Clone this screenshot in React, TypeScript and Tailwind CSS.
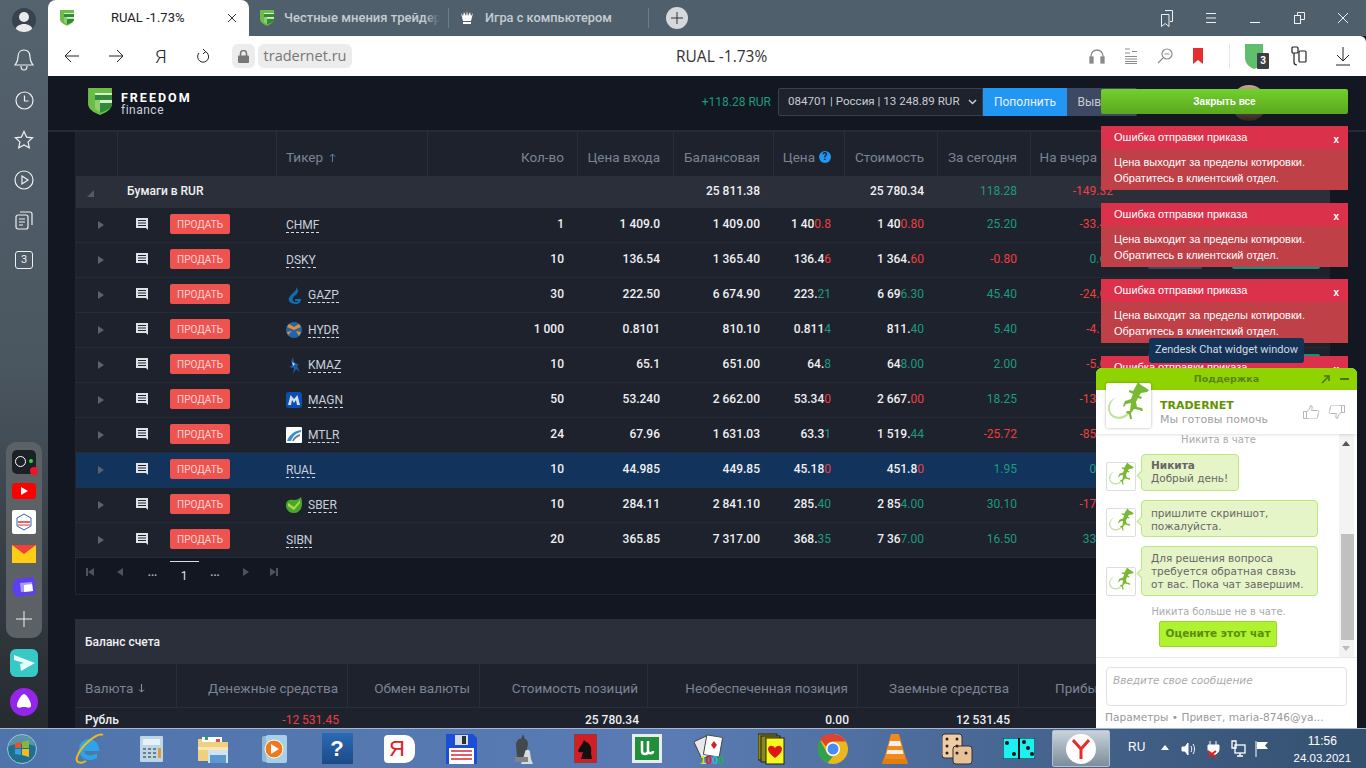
import React from "react";

const G = "text-[#1d9a7f]";
const R = "text-[#ee3f3f]";
const COLS = "grid grid-cols-[42px_159px_151px_150px_96px_100px_71px_93px_93px_96px_1fr]";
const BAL = "grid grid-cols-[102px_171px_132px_168px_210px_161px_1fr]";

type Row = {
  t: string; logo?: string; q: string; entry: string; bal: string;
  p: [string, string, string]; v: [string, string, string];
  d: [string, string]; y: [string, string]; hl?: boolean;
};

const rows: Row[] = [
  { t: "CHMF", q: "1", entry: "1 409.0", bal: "1 409.00", p: ["1 40", "0.8", R], v: ["1 40", "0.80", R], d: ["25.20", G], y: ["-33.40", R] },
  { t: "DSKY", q: "10", entry: "136.54", bal: "1 365.40", p: ["136.4", "6", R], v: ["1 364.", "60", R], d: ["-0.80", R], y: ["0.60", G] },
  { t: "GAZP", logo: "gazp", q: "30", entry: "222.50", bal: "6 674.90", p: ["223.", "21", G], v: ["6 69", "6.30", G], d: ["45.40", G], y: ["-24.00", R] },
  { t: "HYDR", logo: "hydr", q: "1 000", entry: "0.8101", bal: "810.10", p: ["0.811", "4", G], v: ["811.", "40", G], d: ["5.40", G], y: ["-4.10", R] },
  { t: "KMAZ", logo: "kmaz", q: "10", entry: "65.1", bal: "651.00", p: ["64.", "8", G], v: ["64", "8.00", G], d: ["2.00", G], y: ["-5.00", R] },
  { t: "MAGN", logo: "magn", q: "50", entry: "53.240", bal: "2 662.00", p: ["53.34", "0", R], v: ["2 667.", "00", R], d: ["18.25", G], y: ["-13.50", R] },
  { t: "MTLR", logo: "mtlr", q: "24", entry: "67.96", bal: "1 631.03", p: ["63.3", "1", G], v: ["1 519.", "44", G], d: ["-25.72", R], y: ["-85.44", R] },
  { t: "RUAL", q: "10", entry: "44.985", bal: "449.85", p: ["45.18", "0", R], v: ["451.8", "0", R], d: ["1.95", G], y: ["0.50", G], hl: true },
  { t: "SBER", logo: "sber", q: "10", entry: "284.11", bal: "2 841.10", p: ["285.", "40", G], v: ["2 85", "4.00", G], d: ["30.10", G], y: ["-17.00", R] },
  { t: "SIBN", q: "20", entry: "365.85", bal: "7 317.00", p: ["368.", "35", G], v: ["7 36", "7.00", G], d: ["16.50", G], y: ["33.00", G] },
];

function Shield({ size = 16 }: { size?: number }) {
  return (
    <svg width={size} height={size * 1.12} viewBox="0 0 24 27">
      <path d="M0 0h24v16c0 5-6 9-12 11C6 25 0 21 0 16z" fill="#6cbd45" />
      <path d="M7 7h17v5H7z" fill="#2f8a3a" />
      <path d="M7 12h5v12l-5-3z" fill="#fff" opacity=".25" />
      <path d="M12 15h12v1c0 2-1 4-3 5l-9 4z" fill="#2f8a3a" />
      <path d="M7 5h17v2H7zM12 12h12v3H12z" fill="#d8efc8" />
    </svg>
  );
}

function Gecko({ size = 45 }: { size?: number }) {
  return (
    <svg width={size} height={size} viewBox="0 0 45 45">
      <path d="M23 31C17 39 4 37 2 27 1 21 5 16 11 14 6 17 3 22 4 27c2 8 12 9 18 2z" fill="#c3e19e" />
      <path d="M35 2l8 5-2 2-6 1-2 3 3 1-1 2-3-1-2 4 1 5 5 1 1 3-2 0-1-1-6-1-3 4 1 6-2 0-1-5-3-1 1-2 3 0 1-8-5 1-2 3-1-1 2-5 6-2 2-5-4-2 0-2 4 1 3-5 2-4z" fill="#78b832" />
    </svg>
  );
}

function Logo({ k }: { k: string }) {
  if (k === "gazp")
    return (
      <svg width="15" height="17" viewBox="0 0 15 17">
        <path d="M9 0c1 3-1 4-3 6C3 9 1 11 2 14c1 2 4 3 7 3 3 0 5-2 5-5H8v2h3c0 1-1 1-2 1-3 0-4-2-3-4 1-3 5-3 5-7 0-1-1-3-2-4z" fill="#0f6fb5" />
      </svg>
    );
  if (k === "hydr")
    return (
      <svg width="16" height="16" viewBox="0 0 16 16">
        <circle cx="8" cy="8" r="8" fill="#1b67b3" />
        <path d="M3 2l5 3 5-3 2 3-7 3-7-3zM1 10l5-1-4 4zM15 10l-5-1 3 5z" fill="#f08a24" />
      </svg>
    );
  if (k === "kmaz")
    return (
      <svg width="15" height="17" viewBox="0 0 15 17">
        <path d="M6 0L4 5l4 2-6 3 5 1-1 6 3-5 4 3-3-6 2-1-5-3z" fill="#1b5ea8" />
        <path d="M5 5l3 2-2 2z" fill="#cfe3f7" />
      </svg>
    );
  if (k === "magn")
    return (
      <svg width="16" height="16" viewBox="0 0 16 16">
        <rect width="16" height="16" rx="3" fill="#0c4fb0" />
        <path d="M2 13L4.500 3 8 7l3.500-4L14 13h-3L10 8 8 11 6 8l-1 5z" fill="#cfe0f5" />
      </svg>
    );
  if (k === "mtlr")
    return (
      <svg width="16" height="16" viewBox="0 0 16 16">
        <rect width="16" height="16" rx="1" fill="#fff" />
        <path d="M1 14C3 8 8 4 15 3v2C10 6 7 9 5 14z" fill="#3a8fd6" />
        <path d="M6 14c1-3 4-6 8-7v2c-3 1-5 3-6 5z" fill="#7a7f87" />
      </svg>
    );
  return (
    <svg width="16" height="16" viewBox="0 0 16 16">
      <path d="M8 3c3 0 5-1 7-3 1 2 1 5 1 7 0 5-3 9-8 9s-8-3-8-8 4-6 8-5z" fill="#4aa52e" />
      <path d="M2 6l6 4 6-7v3l-6 7-6-4z" fill="#a7dd3d" />
    </svg>
  );
}

function Tri({ cls = "" }: { cls?: string }) {
  return <div className={`w-0 h-0 border-y-[4px] border-y-transparent border-l-[6px] border-l-[#5c6270] ${cls}`} />;
}

function Note() {
  return (
    <svg width="12" height="12" viewBox="0 0 12 12">
      <path d="M0 0h12v12l-2-2H0z" fill="#dfe3e8" />
      <path d="M2 2.500h8M2 5h8M2 7.500h8" stroke="#1e222d" strokeWidth="1" />
    </svg>
  );
}

function Num({ v }: { v: [string, string, string] }) {
  return (
    <span>
      {v[0]}
      <span className={`${v[2]} font-normal`}>{v[1]}</span>
    </span>
  );
}

function Help() {
  return <span className="w-[12px] h-[12px] rounded-full bg-[#2196f3] text-[#10223c] text-[10px] font-bold leading-[12px] text-center shrink-0">?</span>;
}

function HeadCell({ children, last }: { children: React.ReactNode; last?: boolean }) {
  return (
    <div className={`h-full flex items-center justify-end pt-[6px] gap-[4px] text-[13.500px] text-[#7b8494] whitespace-nowrap ${last ? "pr-[14px]" : "pr-[13px] border-r border-[#2a2e39]"}`}>
      {children}
    </div>
  );
}

function StockRow({ r }: { r: Row }) {
  const cell = "h-full flex items-center justify-end pr-[14px] pb-[2px] text-[12px] font-medium text-[#eef0f3]";
  return (
    <div className={`${COLS} h-[35px] border-b border-dotted border-[#2e323d] ${r.hl ? "bg-[#12335c]" : ""}`}>
      <div className="flex items-center justify-end pr-[14px]"><Tri /></div>
      <div className="flex items-center pb-[2px]">
        <div className="ml-[18px] w-[34px]"><Note /></div>
        <div className="w-[60px] h-[20px] rounded-[2px] bg-[#ef5350] text-[#ffd5d3] text-[10px] flex items-center justify-center">ПРОДАТЬ</div>
      </div>
      <div className="flex items-center pl-[9px] gap-[6px]">
        {r.logo && <div className="w-[16px] flex justify-center"><Logo k={r.logo} /></div>}
        <span className="text-[12px] text-[#c8d0dc] border-b border-dashed border-[#d8dde4] leading-[14px]">{r.t}</span>
      </div>
      <div className={cell}>{r.q}</div>
      <div className={cell}>{r.entry}</div>
      <div className={cell}>{r.bal}</div>
      <div className={cell}><Num v={r.p} /></div>
      <div className={cell}><Num v={r.v} /></div>
      <div className={`h-full flex items-center justify-end pr-[14px] pb-[3px] text-[12px] ${r.d[1]}`}>{r.d[0]}</div>
      <div className={`h-full flex items-center justify-end pr-[14px] pb-[2px] text-[12px] ${r.y[1]}`}>{r.y[0]}</div>
      <div className="flex items-center pl-[21px] pb-[2px]">
        <div className="w-[54px] h-[20px] rounded-[2px] bg-[#3b4660]" />
        <div className="w-[88px] h-[20px] ml-[30px] rounded-[2px] bg-[#14907f]" />
      </div>
    </div>
  );
}

function Toast({ cut }: { cut?: boolean }) {
  return (
    <div className={`w-[247px] text-white text-[11px] ${cut ? "h-[12px] overflow-hidden" : ""}`} style={{ fontFamily: '"Liberation Sans", sans-serif' }}>
      <div className="h-[23px] bg-[#dc314b] flex items-center justify-between pl-[13px] pr-[9px]">
        <span>Ошибка отправки приказа</span>
        <span className="text-[10px] font-bold pt-[3px]">x</span>
      </div>
      <div className="h-[41px] bg-[#c04048] pl-[13px] pt-[5px] leading-[16px]">
        <div>Цена выходит за пределы котировки.</div>
        <div>Обратитесь в клиентский отдел.</div>
      </div>
    </div>
  );
}

function ChatMsg({ h, w, children }: { h: number; w: number; children: React.ReactNode }) {
  return (
    <div className="flex items-end" style={{ height: h }}>
      <div className="ml-[10px] w-[30px] h-[29px] border border-[#ddd] rounded-[2px] bg-white flex items-center justify-center">
        <Gecko size={27} />
      </div>
      <div className="relative ml-[5px]" style={{ width: w }}>
        <div className="absolute left-[-3px] top-1/2 w-[7px] h-[7px] rotate-45 bg-[#e6f5c8] border-l border-b border-[#bce878] -translate-y-[1px]" />
        <div className="border border-[#bce878] bg-[#e6f5c8] rounded-[4px] pl-[9px] pr-[6px] py-[3px] text-[10.500px] leading-[13px] text-[#666]" style={{ height: h }}>
          {children}
        </div>
      </div>
    </div>
  );
}

function Chat() {
  return (
    <div className="absolute left-[1096px] top-[368px] w-[261px] h-[360px] z-30 flex flex-col bg-white rounded-t-[6px] overflow-hidden text-[11px]" style={{ fontFamily: '"DejaVu Sans", sans-serif' }}>
      <div className="h-[22px] bg-[#8fd400] flex items-center relative">
        <span className="w-full text-center font-bold text-[9.500px] text-[#5c7f1e]">Поддержка</span>
        <svg className="absolute left-[225px] top-[7px]" width="9" height="9" viewBox="0 0 9 9"><path d="M1 8l6-6M3 1h5v5" stroke="#4f6f16" strokeWidth="1.500" fill="none" /></svg>
        <div className="absolute left-[244px] top-[10px] w-[9px] h-[2px] bg-[#4f6f16]" />
      </div>
      <div className="h-[44px] relative flex shadow-[0_1px_3px_rgba(0,0,0,0.12)] z-10 bg-white">
        <div className="absolute left-[10px] top-[-7px] w-[45px] h-[45px] bg-white rounded-[2px] shadow-[0_0_3px_rgba(0,0,0,0.3)]"><Gecko /></div>
        <div className="ml-[64px] pt-[9px]">
          <div className="font-bold text-[11px] leading-[13px] text-[#5f9400]">TRADERNET</div>
          <div className="text-[#a0a0a0] leading-[13px] mt-[1px] text-[11px]">Мы готовы помочь</div>
        </div>
        <svg className="absolute left-[207px] top-[15px]" width="17" height="14" viewBox="0 0 17 14" fill="none" stroke="#b5b5b5"><path d="M.5 6.500h3v7h-3zM3.500 7l3-3 1-3.500c2 0 2 2 1 5h6c1 0 2 1 1 2l-1 5c0 1-1 1.500-2 1.500H6l-2.500-1" /></svg>
        <svg className="absolute left-[232px] top-[15px]" width="17" height="14" viewBox="0 0 17 14" fill="none" stroke="#b5b5b5"><path d="M16.500 7.500h-3v-7h3zM13.500 7l-3 3-1 3.500c-2 0-2-2-1-5h-6c-1 0-2-1-1-2l1-5c0-1 1-1.500 2-1.500H11l2.500 1" /></svg>
      </div>
      <div className="h-[223px] relative flex">
        <div className="w-[243px] flex flex-col">
          <div className="h-[12px] text-center text-[#aaa] text-[10px] leading-[12px] pl-[2px]">Никита в чате</div>
          <div className="h-[8px]" />
          <ChatMsg h={37} w={98}><div className="font-bold leading-[13px] pt-[1px]">Никита</div><div>Добрый день!</div></ChatMsg>
          <div className="h-[9px]" />
          <ChatMsg h={37} w={177}><div className="pt-[3px]">пришлите скриншот,<br />пожалуйста.</div></ChatMsg>
          <div className="h-[9px]" />
          <ChatMsg h={50} w={177}><div className="pt-[2px]">Для решения вопроса<br />требуется обратная связь<br />от вас. Пока чат завершим.</div></ChatMsg>
          <div className="h-[10px]" />
          <div className="text-center text-[#aaa] text-[9.800px] leading-[12px] pl-[2px]">Никита больше не в чате.</div>
          <div className="flex justify-center mt-[3px] pl-[1px]">
            <div className="w-[118px] h-[26px] rounded-[2px] bg-[#aff230] border border-[#98d828] flex items-center justify-center font-bold text-[10.500px] text-[#5c8c10]">Оцените этот чат</div>
          </div>
        </div>
        <div className="w-[15px] bg-[#f3f3f3] relative mr-[3px]">
          <div className="absolute left-[3px] top-[7px] w-0 h-0 border-x-[4px] border-x-transparent border-b-[5px] border-b-[#555]" />
          <div className="absolute left-[2px] top-[100px] w-[13px] h-[106px] bg-[#c0c0c0]" />
          <div className="absolute left-[3px] top-[212px] w-0 h-0 border-x-[4px] border-x-transparent border-t-[5px] border-t-[#bbb]" />
        </div>
      </div>
      <div className="flex-1 border-t border-[#e8e8e8] px-[10px] pt-[9px]">
        <div className="h-[39px] border border-[#e2e2e2] rounded-[4px] pl-[6px] pt-[5px] italic text-[#aaa] text-[10.500px]">Введите свое сообщение</div>
        <div className="mt-[4px] text-[#999] text-[10.600px] whitespace-nowrap -ml-[1px]">Параметры • Привет, maria-8746@ya...</div>
      </div>
    </div>
  );
}

function Sidebar() {
  const slot = "h-[40px] flex items-center justify-center";
  return (
    <div className="w-[48px] shrink-0 flex flex-col bg-gradient-to-b from-[#55636f] via-[#4a5660] to-[#262b30]">
      <div className={slot}>
        <div className="w-[24px] h-[24px] rounded-full bg-[#39434d] overflow-hidden flex justify-center">
          <svg width="24" height="24" viewBox="0 0 24 24"><circle cx="12" cy="9" r="5" fill="#e8eaec" /><path d="M3 24c0-6 5-8 9-8s9 2 9 8z" fill="#e8eaec" /></svg>
        </div>
      </div>
      <div className={slot}>
        <svg width="20" height="22" viewBox="0 0 20 22" fill="none" stroke="#eef0f2" strokeWidth="1.200"><path d="M10 1c-4 0-6 3-6 7 0 5-2 6-3 8h18c-1-2-3-3-3-8 0-4-2-7-6-7zM7 17c0 2 1 4 3 4s3-2 3-4" /></svg>
      </div>
      <div className={slot}>
        <svg width="19" height="19" viewBox="0 0 19 19" fill="none" stroke="#eef0f2" strokeWidth="1.200"><circle cx="9.500" cy="9.500" r="8.500" /><path d="M9.500 4.500v5.500h4" /></svg>
      </div>
      <div className={slot}>
        <svg width="20" height="20" viewBox="0 0 20 20" fill="none" stroke="#eef0f2" strokeWidth="1.200"><path d="M10 1.500l2.600 5.600 6 .7-4.500 4.100 1.200 6L10 15l-5.300 2.900 1.200-6L1.400 7.800l6-.7z" /></svg>
      </div>
      <div className={slot}>
        <svg width="20" height="20" viewBox="0 0 20 20" fill="none" stroke="#eef0f2" strokeWidth="1.200"><circle cx="10" cy="10" r="9" /><path d="M8 6l6 4-6 4z" /></svg>
      </div>
      <div className={slot}>
        <svg width="18" height="19" viewBox="0 0 18 19" fill="none" stroke="#eef0f2" strokeWidth="1.200"><rect x="1" y="4" width="12" height="14" rx="2" /><path d="M5 1h10a2 2 0 0 1 2 2v11M4 8h6M4 11h6M4 14h4" /></svg>
      </div>
      <div className={slot}>
        <div className="w-[18px] h-[18px] border border-[#eef0f2] rounded-[3px] flex items-center justify-center text-[11px] text-[#eef0f2]">3</div>
      </div>
      <div className="mt-[162px] mx-[6px] h-[196px] rounded-[10px] bg-[#5c6166] flex flex-col items-center">
        <div className="h-[36px] flex items-center justify-center mt-[2px]">
          <div className="relative w-[24px] h-[24px] rounded-[5px] bg-[#1c2126]">
            <div className="absolute left-[3px] top-[6px] w-[11px] h-[11px] rounded-full border border-white" />
            <div className="absolute left-[17px] top-[9px] w-[4px] h-[4px] rounded-full bg-[#2ddb3c]" />
            <div className="absolute left-[18px] top-[17px] w-[8px] h-[8px] rounded-full bg-[#f0142a]" />
          </div>
        </div>
        <div className="h-[30px] flex items-center justify-center -mt-[4px]">
          <div className="w-[24px] h-[16px] rounded-[4px] bg-[#f00] flex items-center justify-center">
            <div className="w-0 h-0 border-y-[4px] border-y-transparent border-l-[7px] border-l-white" />
          </div>
        </div>
        <div className="h-[32px] flex items-center justify-center">
          <svg width="24" height="24" viewBox="0 0 24 24"><rect width="24" height="24" rx="2" fill="#fff" /><path d="M12 4l7 4v8l-7 4-7-4V8z" fill="none" stroke="#2a66b5" strokeWidth="1" /><path d="M6 12h12" stroke="#d8303a" strokeWidth="1.500" /><path d="M6 15h12" stroke="#d8303a" strokeWidth="1" /></svg>
        </div>
        <div className="h-[32px] flex items-center justify-center">
          <svg width="24" height="18" viewBox="0 0 24 18"><rect width="24" height="18" fill="#ffcc16" /><path d="M0 0h24L12 9z" fill="#f2403a" /></svg>
        </div>
        <div className="h-[33px] flex items-center justify-center">
          <svg width="24" height="20" viewBox="0 0 24 20"><path d="M3 2L22 0l2 17-20 3-4-8z" fill="#5d3ff0" /><path d="M8 6l12-1 1 9-12 1z" fill="#a99cf7" /><path d="M12 8l8-1 1 7-9 1z" fill="#fff" /></svg>
        </div>
        <div className="h-[31px] flex items-center justify-center">
          <svg width="16" height="16" viewBox="0 0 16 16" stroke="#eef0f2" strokeWidth="1"><path d="M8 0v16M0 8h16" /></svg>
        </div>
      </div>
      <div className="h-[50px] flex items-center justify-center">
        <svg width="28" height="28" viewBox="0 0 28 28"><rect width="28" height="28" rx="6" fill="#36c9c6" /><path d="M4 6l21 8-15 1 4-1-10-3zM10 15l1 7 14-8z" fill="#e8fbfa" /></svg>
      </div>
      <div className="h-[28px] flex items-center justify-center">
        <svg width="28" height="28" viewBox="0 0 28 28"><circle cx="14" cy="14" r="14" fill="#9426ec" /><path d="M14 6c3 0 8 10 7 12-1 3-4 1-7 1s-6 2-7-1c-1-2 4-12 7-12z" fill="#fff" /></svg>
      </div>
    </div>
  );
}

function TabBar() {
  const tabText = "text-[13px] font-medium text-[#c5ccd2] whitespace-nowrap";
  const ctl = "w-[44px] flex items-center justify-center";
  return (
    <div className="h-[36px] bg-[#4f5f6c] flex items-stretch">
      <div className="w-[201px] bg-white rounded-t-[8px] flex items-center relative">
        <div className="ml-[12px]"><Shield size={14} /></div>
        <span className="ml-[37px] text-[13px] text-[#222]">RUAL -1.73%</span>
        <svg className="absolute left-[179px] top-[13px]" width="10" height="10" viewBox="0 0 10 10" stroke="#333" strokeWidth="1"><path d="M1 1l8 8M9 1l-8 8" /></svg>
      </div>
      <div className="w-[199px] flex items-center relative">
        <div className="ml-[11px]"><Shield size={14} /></div>
        <span className={`ml-[10px] w-[156px] overflow-hidden ${tabText}`}>Честные мнения трейдеров</span>
        <div className="absolute left-[175px] top-[8px] w-[16px] h-[20px] bg-gradient-to-r from-transparent to-[#4f5f6c]" />
        <div className="absolute left-[199px] top-[8px] w-px h-[20px] bg-[#6f7d88]" />
      </div>
      <div className="w-[200px] flex items-center">
        <svg className="ml-[12px]" width="14" height="14" viewBox="0 0 14 14"><path d="M1 2l2 3 1-4 2 4 1-5 1 5 2-4 1 4 2-3-2 8H3z" fill="#fff" /><rect x="3" y="11" width="8" height="2" fill="#fff" /></svg>
        <span className="ml-[11px] text-[12.800px] font-medium text-[#c5ccd2] whitespace-nowrap">Игра с компьютером</span>
      </div>
      <div className="w-px h-[20px] mt-[8px] bg-[#6f7d88]" />
      <div className="ml-[17px] mt-[7px] w-[22px] h-[22px] rounded-full bg-[#d5d9dc] flex items-center justify-center">
        <svg width="12" height="12" viewBox="0 0 12 12" stroke="#333" strokeWidth="1"><path d="M6 0v12M0 6h12" /></svg>
      </div>
      <div className="flex-1 flex items-stretch justify-end pr-[1px]">
        <div className={ctl}><svg width="12" height="17" viewBox="0 0 12 17" fill="none" stroke="#eef0f2"><path d="M4 .5h7.500v11H9M.5 4.500H8v12L4.200 13.500.5 16.500z" /></svg></div>
        <div className={ctl}><svg width="12" height="12" viewBox="0 0 12 12" stroke="#eef0f2"><path d="M1 1.500h10M1 6h10M1 10.500h10" /></svg></div>
        <div className={ctl}><div className="w-[10px] h-[1px] bg-white mt-[9px]" /></div>
        <div className={ctl}><svg width="11" height="12" viewBox="0 0 11 12" fill="none" stroke="#eef0f2"><rect x=".5" y="3.500" width="6" height="8" /><path d="M3.500 3.500V.5h7v7H7" /></svg></div>
        <div className={ctl}><svg width="12" height="12" viewBox="0 0 12 12" stroke="#eef0f2"><path d="M1 1l10 10M11 1L1 11" /></svg></div>
      </div>
    </div>
  );
}

function AddressBar() {
  return (
    <div className="h-[40px] bg-white rounded-tr-[6px] flex items-center relative shrink-0">
      <svg className="ml-[16px]" width="16" height="14" viewBox="0 0 16 14" fill="none" stroke="#222"><path d="M15 7H1M7 1L1 7l6 6" /></svg>
      <svg className="ml-[28px]" width="16" height="14" viewBox="0 0 16 14" fill="none" stroke="#222"><path d="M1 7h14M9 1l6 6-6 6" /></svg>
      <span className="ml-[31px] w-[10px] text-[19px] font-light text-[#222] leading-none">Я</span>
      <svg className="ml-[31px]" width="14" height="16" viewBox="0 0 14 16" fill="none" stroke="#222"><path d="M9 3.500A5.500 5.500 0 1 1 3 5M7 1l2.500 2.500L7 6" /></svg>
      <div className="ml-[22px] w-[23px] h-[24px] rounded-[6px] bg-[#ececec] flex items-center justify-center">
        <svg width="11" height="13" viewBox="0 0 11 13"><path d="M2.500 6V3.500a3 3 0 0 1 6 0V6" fill="none" stroke="#777" strokeWidth="1.500" /><rect y="5.500" width="11" height="7.500" rx="1" fill="#777" /></svg>
      </div>
      <div className="ml-[3px] w-[94px] h-[24px] rounded-[6px] bg-[#ececec] flex items-center justify-center text-[14.500px] text-[#777]" style={{ fontFamily: '"Open Sans", sans-serif' }}>tradernet.ru</div>
      <div className="absolute left-[628px] top-[11px] text-[15.500px] leading-[18px] text-[#333] whitespace-nowrap" style={{ fontFamily: '"Open Sans", sans-serif' }}>RUAL -1.73%</div>
      <div className="ml-auto flex items-center pr-[15px]">
        <svg width="16" height="16" viewBox="0 0 16 16" fill="none" stroke="#8b8b8b" strokeWidth="1.300"><path d="M2 10V8a6 6 0 0 1 12 0v2" /><rect x="1" y="9" width="3" height="6" fill="#8b8b8b" /><rect x="12" y="9" width="3" height="6" fill="#8b8b8b" /></svg>
        <svg className="ml-[19px]" width="14" height="16" viewBox="0 0 14 16" stroke="#8b8b8b"><path d="M1 1h5M1 5h5M1 8.500h12M1 11h12M1 13.500h12M1 15.500h12M8 3.500h5" /></svg>
        <svg className="ml-[19px]" width="16" height="16" viewBox="0 0 16 16" fill="none" stroke="#8b8b8b" strokeWidth="1.200"><circle cx="10" cy="6" r="5" /><path d="M6 10l-5 5M7.500 6h5" /></svg>
        <svg className="ml-[20px]" width="10" height="16" viewBox="0 0 10 16"><path d="M0 0h10v16l-5-4-5 4z" fill="#e52e2e" /></svg>
        <div className="ml-[26px] w-px h-[24px] bg-[#e6e6e6]" />
        <div className="ml-[15px] relative w-[24px] h-[26px]">
          <svg width="20" height="26" viewBox="0 0 20 26"><path d="M0 1h18v14c0 5-4 9-9 11-5-2-9-6-9-11z" fill="#5fbf6d" /></svg>
          <div className="absolute left-[12px] top-[10px] w-[12px] h-[16px] bg-[#3b3f44] rounded-[1px] text-white text-[10px] font-bold text-center leading-[16px]">3</div>
        </div>
        <svg className="ml-[22px]" width="16" height="20" viewBox="0 0 16 20" fill="none" stroke="#222" strokeWidth="1.200"><rect x="1" y="1" width="6" height="6" rx="1" /><rect x="8" y="5" width="7" height="11" rx="1" /><path d="M3 7v9c0 2 1 3 3 3" /></svg>
        <svg className="ml-[28px]" width="16" height="20" viewBox="0 0 16 20" fill="none" stroke="#222"><path d="M8 1v13M2 9l6 6 6-6M1 19h14" /></svg>
      </div>
    </div>
  );
}

function PageHeader() {
  return (
    <div className="h-[56px] shrink-0 relative flex items-center border-b-[2px] border-[#262a34]">
      <div className="ml-[40px] mt-[-3px]"><Shield size={24} /></div>
      <div className="ml-[9px] mt-[1px] text-white">
        <div className="font-bold text-[12.500px] leading-[13px] tracking-[2px]">FREEDOM</div>
        <div className="text-[12px] leading-[12px] tracking-[0.500px] text-[#cfd2d6]">finance</div>
      </div>
      <div className="ml-auto flex items-center text-[12px] mt-[-2px] mr-[229px]">
        <span className="text-[#1d9a7f] mr-[7px]">+118.28 RUR</span>
        <div className="w-[205px] h-[28px] border border-[#3a3f4c] bg-[#1e222d] text-[#c8ccd2] flex items-center justify-between pl-[9px] pr-[5px] rounded-l-[2px]">
          <span className="text-[11.600px]">084701 | Россия | 13 248.89 RUR</span>
          <svg width="9" height="6" viewBox="0 0 9 6" fill="none" stroke="#c8ccd2" strokeWidth="1.500"><path d="M1 1l3.500 3.500L8 1" /></svg>
        </div>
        <div className="w-[84px] h-[28px] bg-[#2196f3] text-[#e8f3fd] flex items-center justify-center">Пополнить</div>
        <div className="w-[70px] h-[28px] bg-[#3d4862] text-[#c8ccd2] rounded-r-[2px] flex items-center justify-center">Вывести</div>
      </div>
      <div className="absolute left-[1183px] top-[9px] w-[36px] h-[36px] rounded-full overflow-hidden bg-gradient-to-b from-[#c9a58c] to-[#2f2420]" />
    </div>
  );
}

function StockTable() {
  return (
    <div className="w-[1255px] ml-[27px] shrink-0 border-l border-[#23262f]">
      <div className={`${COLS} h-[44px] bg-[#1e222d]`}>
        <div className="border-r border-[#2a2e39]" />
        <div className="border-r border-[#2a2e39]" />
        <div className="border-r border-[#2a2e39] flex items-center pl-[9px] pt-[6px] text-[13.500px] text-[#7b8494]">
          Тикер
          <svg className="ml-[6px]" width="7" height="9" viewBox="0 0 7 9" fill="none" stroke="#5f7fa8" strokeWidth="1"><path d="M3.500 9V1M1 3.500L3.500 1 6 3.500" /></svg>
        </div>
        <HeadCell>Кол-во</HeadCell>
        <HeadCell>Цена входа</HeadCell>
        <HeadCell>Балансовая</HeadCell>
        <HeadCell>
          Цена
          <Help />
        </HeadCell>
        <HeadCell>Стоимость</HeadCell>
        <HeadCell>За сегодня</HeadCell>
        <HeadCell last>На вчера<Help /></HeadCell>
        <div />
      </div>
      <div className={`${COLS} h-[32px] bg-[#2b2f3a] text-[12px] font-medium text-[#f0f1f3]`}>
        <div className="flex items-center pl-[11px] pt-[3px]">
          <div className="w-0 h-0 border-l-[7px] border-l-transparent border-b-[7px] border-b-[#555a66]" />
        </div>
        <div className="col-span-4 flex items-center pl-[9px] pb-[2px]">Бумаги в RUR</div>
        <div className="flex items-center justify-end pr-[14px] pb-[2px] col-start-6">25 811.38</div>
        <div />
        <div className="flex items-center justify-end pr-[14px] pb-[2px]">25 780.34</div>
        <div className={`flex items-center justify-end pr-[14px] pb-[2px] font-normal ${G}`}>118.28</div>
        <div className={`flex items-center justify-end pr-[14px] pb-[2px] font-normal ${R}`}>-149.32</div>
        <div />
      </div>
      <div className="bg-[#1e222d]">
        {rows.map((r) => <StockRow key={r.t} r={r} />)}
      </div>
      <div className="h-[37px] relative flex items-start pt-[10px] border-b border-[#23262f] text-[#aab2bf]">
        <div className="w-[30px] pl-[10px]">
          <svg width="8" height="8" viewBox="0 0 8 8" fill="#4c5260"><path d="M0 0h2v8H0zM8 0v8L2 4z" /></svg>
        </div>
        <div className="w-[31px] pl-[11px]">
          <svg width="6" height="8" viewBox="0 0 6 8" fill="#4c5260"><path d="M6 0v8L0 4z" /></svg>
        </div>
        <div className="w-[30px] text-center text-[11px] leading-[10px] font-bold pl-[1px]">...</div>
        <div className="w-[32px] text-center relative text-[12px] leading-[14px] pt-[1px] text-[#cfe3f5] ml-[1px]">
          1
          <div className="absolute left-[2px] top-[-7px] w-[29px] h-px bg-[#d8dde4]" />
        </div>
        <div className="w-[30px] text-center text-[11px] leading-[10px] font-bold">...</div>
        <div className="w-[30px] pl-[13px]">
          <svg width="6" height="8" viewBox="0 0 6 8" fill="#4c5260"><path d="M0 0v8l6-4z" /></svg>
        </div>
        <div className="w-[30px] pl-[10px]">
          <svg width="8" height="8" viewBox="0 0 8 8" fill="#4c5260"><path d="M0 0v8l6-4zM6 0h2v8H6z" /></svg>
        </div>
      </div>
    </div>
  );
}

function BalanceHead({ children, last }: { children: React.ReactNode; last?: boolean }) {
  return (
    <div className={`flex items-center justify-end pr-[9px] pt-[6px] text-[13.500px] text-[#7b8494] whitespace-nowrap ${last ? "" : "border-r border-[#2a2e39]"}`}>{children}</div>
  );
}

function Balance() {
  const c = "flex items-center justify-end pr-[9px] text-[12px] font-medium text-[#eef0f3]";
  return (
    <div className="w-[1255px] ml-[27px] mt-[24px] bg-[#1e222d] flex-1 overflow-hidden">
      <div className="h-[45px] bg-[#2b2f3a] flex items-center pl-[10px] text-[12px] font-medium text-[#f0f1f3]">Баланс счета</div>
      <div className={`${BAL} h-[44px] border-b border-[#2a2e39]`}>
        <div className="flex items-center pl-[10px] pt-[6px] text-[13.500px] text-[#7b8494] border-r border-[#2a2e39]">
          Валюта
          <svg className="ml-[5px]" width="7" height="9" viewBox="0 0 7 9" fill="none" stroke="#8c94a2"><path d="M3.500 0v8M1 5.500L3.500 8 6 5.500" /></svg>
        </div>
        <BalanceHead>Денежные средства</BalanceHead>
        <BalanceHead>Обмен валюты</BalanceHead>
        <BalanceHead>Стоимость позиций</BalanceHead>
        <BalanceHead>Необеспеченная позиция</BalanceHead>
        <BalanceHead>Заемные средства</BalanceHead>
        <div className="flex items-center pl-[36px] pt-[6px] text-[13.500px] text-[#7b8494] whitespace-nowrap">Прибыль</div>
      </div>
      <div className={`${BAL} h-[24px]`}>
        <div className="flex items-center pl-[10px] text-[12px] font-medium text-[#f0f1f3]">Рубль</div>
        <div className={`${c} font-normal`}><span className={R}>-12 531.45</span></div>
        <div />
        <div className={c}>25 780.34</div>
        <div className={c}>0.00</div>
        <div className={c}>12 531.45</div>
        <div />
      </div>
    </div>
  );
}

function TB({ children }: { children: React.ReactNode }) {
  return <div className="w-[62px] shrink-0 flex items-center justify-center">{children}</div>;
}

function Taskbar() {
  return (
    <div className="h-[40px] shrink-0 border-t border-[#a8b8d0] flex items-stretch bg-gradient-to-r from-[#4f74ab] via-[#5a7bb3] to-[#34506f] relative overflow-hidden">
      <div className="w-[58px] shrink-0 flex items-center pl-[7px]">
        <svg width="30" height="34" viewBox="0 0 30 34">
          <circle cx="15" cy="17" r="14.500" fill="#1f6f8f" stroke="#9fc6d8" />
          <path d="M2 14a13 11 0 0 1 26 0c-8-3-18-3-26 0z" fill="#fff" opacity=".25" />
          <path d="M8 11l6-1v6H8z" fill="#e8532a" /><path d="M15 10l7-2v8h-7z" fill="#7fba3c" /><path d="M8 17h6v6l-6-1z" fill="#3c9ee0" /><path d="M15 17h7v8l-7-2z" fill="#f5b921" />
        </svg>
      </div>
      <TB>
        <svg width="30" height="32" viewBox="0 0 30 32" fill="none"><path d="M5 16a10 10 0 0 1 20 0v2H10c1 5 8 6 13 2v5c-7 4-18 2-18-9z" fill="#2aa6e8" /><path d="M29 2c-5-3-22 10-26 22-2 6 4 7 9 4" stroke="#f2b91c" strokeWidth="2" /></svg>
      </TB>
      <TB>
        <svg width="23" height="26" viewBox="0 0 23 26"><rect width="23" height="26" rx="1" fill="#bcd6e6" /><rect x="3" y="3" width="17" height="6" fill="#e5f1f8" /><g fill="#6d7f8d"><rect x="3" y="12" width="3" height="2" /><rect x="8" y="12" width="3" height="2" /><rect x="13" y="12" width="3" height="2" /><rect x="3" y="16" width="3" height="2" /><rect x="8" y="16" width="3" height="2" /><rect x="13" y="16" width="3" height="2" /><rect x="3" y="20" width="3" height="2" /><rect x="8" y="20" width="3" height="2" /><rect x="13" y="20" width="3" height="2" /></g><rect x="18" y="12" width="3" height="10" fill="#e39a3b" /></svg>
      </TB>
      <TB>
        <svg width="32" height="28" viewBox="0 0 32 28"><path d="M1 4h12l3 3h15v19H1z" fill="#f0cf7e" /><rect x="5" y="2" width="20" height="5" fill="#fff" /><path d="M8 2h3v3H8z" fill="#2da84a" /><path d="M19 4h4v3h-4z" fill="#e0503a" /><rect x="11" y="15" width="20" height="13" fill="#cfe3f2" /><rect x="13" y="20" width="16" height="8" fill="#5a9ad0" /><path d="M1 12h30v3H1z" fill="#fbe7b3" /></svg>
      </TB>
      <TB>
        <svg width="28" height="30" viewBox="0 0 28 30"><rect x="1" y="2" width="21" height="26" rx="2" fill="#8fb8d2" /><rect x="5" y="1" width="21" height="28" rx="2" fill="#a9cfe4" /><circle cx="13" cy="15" r="9" fill="#ef7a1d" stroke="#fff" /><path d="M10 10l8 5-8 5z" fill="#fff" /></svg>
      </TB>
      <TB>
        <div className="w-[31px] h-[31px] bg-gradient-to-b from-[#2a6ab5] to-[#1d4a86] flex items-center justify-center text-white text-[22px] font-bold" style={{ fontFamily: '"Liberation Sans", sans-serif' }}>?</div>
      </TB>
      <TB>
        <div className="w-[31px] h-[28px] bg-white rounded-l-[4px] rounded-r-[10px] flex items-center justify-center text-[#e81c1c] text-[22px] pr-[4px]" style={{ fontFamily: '"Liberation Sans", sans-serif' }}>Я</div>
      </TB>
      <TB>
        <svg width="31" height="30" viewBox="0 0 31 30"><path d="M0 0h27l4 4v26H0z" fill="#1a4ed6" /><rect x="9" y="1" width="13" height="10" fill="#d9dce0" /><rect x="16" y="2" width="4" height="8" fill="#233" /><rect x="3" y="14" width="25" height="16" fill="#fff" /><path d="M5 17h21M5 21h21M5 25h21" stroke="#d8283a" strokeWidth="1.500" /></svg>
      </TB>
      <TB>
        <svg width="22" height="33" viewBox="0 0 22 33"><path d="M4 13c0-4 3-7 5-6l2-5 2 5c3 1 3 4 3 6l-1 3 1 9H5z" fill="#43484e" /><path d="M13 20c0-3 5-3 5 0l1 7 2 5H9l2-5z" fill="#d8dadc" /><path d="M3 25h13v5H3z" fill="#7f848a" /></svg>
      </TB>
      <TB>
        <svg width="23" height="29" viewBox="0 0 23 29"><rect width="23" height="29" fill="#d21f24" stroke="#555" /><path d="M7 25l2-7c-2 0-4 1-5-1 1-4 5-7 6-11l2 2c4 1 6 6 5 11l1 6z" fill="#111" /></svg>
      </TB>
      <TB>
        <svg width="30" height="29" viewBox="0 0 30 29"><rect width="30" height="29" fill="#e8ecef" /><rect x="3" y="3" width="24" height="23" fill="#1f8f3a" /><path d="M10 7v10c0 4 6 4 6 0V7m0 4v6c0 3 5 3 5 0" fill="none" stroke="#fff" strokeWidth="2.500" /></svg>
      </TB>
      <TB>
        <svg width="30" height="32" viewBox="0 0 30 32"><g transform="rotate(-25 10 14)"><rect x="3" y="5" width="15" height="19" rx="1" fill="#e8e8e8" stroke="#444" /></g><rect x="11" y="3" width="16" height="20" rx="1" transform="rotate(10 19 13)" fill="#fff" stroke="#444" /><path d="M20 8l3 4-3 4-3-4z" fill="#d82020" /><text x="6" y="31" fontSize="11" fontWeight="700" fill="#d8e024" fontFamily="Liberation Sans">1</text><text x="12" y="31" fontSize="11" fontWeight="700" fill="#e02424" fontFamily="Liberation Sans">0</text><text x="18" y="31" fontSize="11" fontWeight="700" fill="#25c0e0" fontFamily="Liberation Sans">0</text><text x="24" y="31" fontSize="11" fontWeight="700" fill="#22b04a" fontFamily="Liberation Sans">0</text></svg>
      </TB>
      <TB>
        <svg width="27" height="32" viewBox="0 0 27 32"><rect x="0" y="1" width="19" height="26" fill="#8a8a14" stroke="#222" /><rect x="3" y="3" width="19" height="26" fill="#8a8a14" stroke="#222" /><rect x="8" y="5" width="18" height="26" fill="#f7f71e" stroke="#222" /><path d="M17 25c-4-3-7-6-7-9 0-3 4-5 7-1 3-4 7-2 7 1 0 3-3 6-7 9z" fill="#e01616" /></svg>
      </TB>
      <TB>
        <svg width="30" height="30" viewBox="0 0 30 30"><circle cx="15" cy="15" r="15" fill="#e9b821" /><path d="M15 0a15 15 0 0 1 13 7.500H15a7.500 7.500 0 0 0-7 5L2 5A15 15 0 0 1 15 0z" fill="#dc4335" /><path d="M2 6l6.500 12A7.500 7.500 0 0 0 15 22.500L9.500 29A15 15 0 0 1 2 6z" fill="#33a04f" /><circle cx="15" cy="15" r="7" fill="#fff" /><circle cx="15" cy="15" r="5.500" fill="#4a8af4" /></svg>
      </TB>
      <TB>
        <svg width="26" height="30" viewBox="0 0 26 30"><path d="M9 0h8l7 25H2z" fill="#f08a1a" /><path d="M8 7h10l1.500 5h-13zM5.500 16h15l1 4h-17z" fill="#f4f0e8" /><path d="M1 25h24l1 5H0z" fill="#e47d10" /></svg>
      </TB>
      <TB>
        <svg width="31" height="32" viewBox="0 0 31 32"><rect x="0" y="1" width="20" height="24" rx="3" fill="#f0cda4" stroke="#333" /><rect x="11" y="13" width="19" height="18" rx="3" fill="#e9c197" stroke="#333" /><g fill="#222"><circle cx="5" cy="6" r="1.500" /><circle cx="15" cy="6" r="1.500" /><circle cx="5" cy="13" r="1.500" /><circle cx="15" cy="13" r="1.500" /><circle cx="5" cy="20" r="1.500" /><circle cx="15" cy="20" r="1.500" /><circle cx="24" cy="20" r="1.500" /></g></svg>
      </TB>
      <TB>
        <svg width="32" height="21" viewBox="0 0 32 21"><rect width="32" height="21" fill="#1cf0f0" stroke="#111" /><rect x="15" width="2" height="21" fill="#111" /><g fill="#111"><circle cx="4" cy="5" r="2" /><circle cx="11" cy="16" r="2" /><circle cx="21" cy="4" r="2" /><circle cx="25" cy="10" r="2" /><circle cx="29" cy="16" r="2" /></g></svg>
      </TB>
      <div className="w-[58px] my-[1px] ml-[2px] shrink-0 rounded-[2px] border border-[#b4c0cc] bg-gradient-to-b from-[#c8d3dc] to-[#7d8d9b] flex items-center justify-center">
        <div className="w-[30px] h-[30px] rounded-full bg-white flex items-center justify-center">
          <svg width="18" height="20" viewBox="0 0 18 20" fill="none" stroke="#e82b2b" strokeWidth="3"><path d="M1 1l8 9 8-9M9 10v10" /></svg>
        </div>
      </div>
      <div className="flex-1 flex items-center text-white text-[12px]" style={{ fontFamily: '"Liberation Sans", sans-serif' }}>
        <span className="ml-[18px] -mt-[3px]">RU</span>
        <div className="ml-[16px] w-0 h-0 border-x-[4px] border-x-transparent border-b-[5px] border-b-white -mt-[2px]" />
        <svg className="ml-[12px]" width="16" height="16" viewBox="0 0 16 16" fill="none" stroke="#fff"><path d="M1 6h3l3-4v12l-3-4H1z" fill="#fff" /><path d="M10 5c1 2 1 4 0 6M12 3c2 3 2 7 0 10" /></svg>
        <svg className="ml-[9px]" width="15" height="18" viewBox="0 0 15 18"><path d="M4 1v4M10 1v4M2 5h11v4a5 5 0 0 1-11 0z" fill="#fff" stroke="#fff" /><path d="M2 11l8 6M10 11l-8 6" stroke="#e02020" strokeWidth="2" /></svg>
        <svg className="ml-[10px]" width="15" height="17" viewBox="0 0 15 17" fill="none" stroke="#fff" strokeWidth="1.300"><rect x="4" y="5" width="10" height="8" /><path d="M1 1h4v7H1zM9 13v3M6 16h6" /></svg>
        <svg className="ml-[9px]" width="14" height="16" viewBox="0 0 14 16"><path d="M1 0v16" stroke="#fff" /><path d="M2 1h11l-3 3.500 3 3.500H2z" fill="#fff" /></svg>
        <div className="ml-[18px] w-[70px] text-center leading-[17px] mt-[3px]">
          <div>11:56</div>
          <div className="text-[11.500px] whitespace-nowrap">24.03.2021</div>
        </div>
      </div>
    </div>
  );
}

export default function App() {
  return (
    <div className="relative w-[1366px] h-[768px] overflow-hidden flex flex-col bg-[#121722]" style={{ fontFamily: 'Roboto, "Noto Sans", sans-serif' }}>
      <div className="h-[728px] flex shrink-0">
        <Sidebar />
        <div className="flex-1 flex flex-col min-w-0">
          <TabBar />
          <AddressBar />
          <div className="flex-1 flex flex-col bg-[#121722] min-h-0 overflow-hidden">
            <PageHeader />
            <StockTable />
            <Balance />
          </div>
        </div>
      </div>
      <Taskbar />

      <div className="absolute left-[1101px] top-[89px] z-10 flex flex-col">
        <div className="w-[247px] h-[25px] rounded-[2px] bg-gradient-to-b from-[#72d02c] to-[#5aa81f] text-white text-[10px] font-bold flex items-center justify-center" style={{ fontFamily: '"Liberation Sans", sans-serif' }}>Закрыть все</div>
        <div className="h-[12px]" />
        <Toast />
        <div className="h-[13px]" />
        <Toast />
        <div className="h-[12px]" />
        <Toast />
        <div className="h-[13px]" />
        <Toast cut />
      </div>

      <div className="absolute left-[1149px] top-[338px] z-20 w-[155px] h-[25px] rounded-[3px] bg-[#143256] text-[#d4dbe3] text-[11px] flex items-center justify-center whitespace-nowrap">Zendesk Chat widget window</div>

      <Chat />
    </div>
  );
}
